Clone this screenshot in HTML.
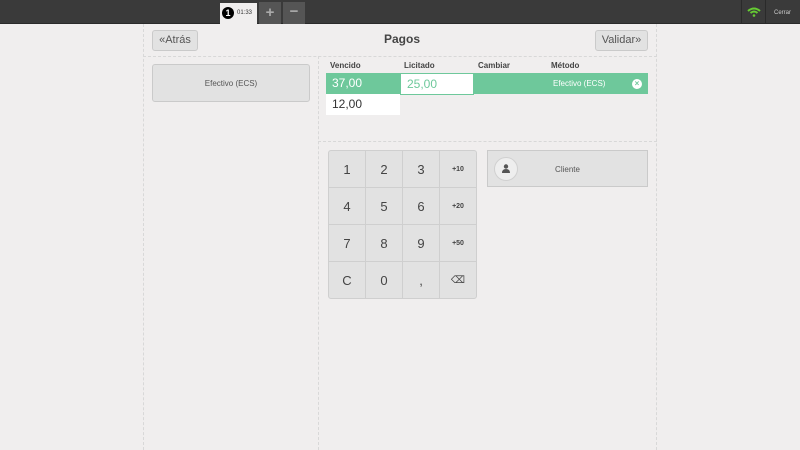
<!DOCTYPE html>
<html><head><style>
*{box-sizing:border-box;margin:0;padding:0}
body{width:800px;height:450px;background:#f0eeee;font-family:"Liberation Sans",sans-serif;position:relative;overflow:hidden;color:#555}
.a{position:absolute}
.top{left:0;top:0;width:800px;height:24px;background:#3a3a3a;border-bottom:1px solid #2a2a2a}
.btn{background:#e2e2e2;border:1px solid #cacaca;border-radius:3px;color:#555}
.num{position:absolute;width:37px;height:37px;border-right:1px solid #cfcfcf;border-bottom:1px solid #cfcfcf;display:flex;align-items:center;justify-content:center;font-size:13px;color:#444}
.sm{font-size:7px;font-weight:bold}
</style></head><body>
<div class="a top"></div>
<div class="a" style="left:220px;top:3px;width:37px;height:21px;background:#f0eeee;"></div>
<div class="a" style="left:222px;top:7px;width:12px;height:12px;border-radius:50%;background:#000;color:#fff;font-size:9px;font-weight:bold;text-align:center;line-height:12px">1</div>
<div class="a" style="left:237px;top:10px;font-size:6px;color:#333">01:33</div>
<div class="a" style="left:259px;top:2px;width:22px;height:22px;background:#555;color:#aaa;font-size:15px;text-align:center;line-height:22px;font-weight:bold">+</div>
<div class="a" style="left:283px;top:2px;width:22px;height:22px;background:#555;color:#aaa;font-size:15px;text-align:center;line-height:20px;font-weight:bold">−</div>
<div class="a" style="left:741px;top:0;width:1px;height:24px;background:#2a2a2a"></div>
<div class="a" style="left:765px;top:0;width:1px;height:24px;background:#2a2a2a"></div>
<svg class="a" style="left:747px;top:7px" width="14" height="10" viewBox="0 0 14 10"><path d="M1 4 Q7 -1 13 4" stroke="#6c3" stroke-width="2" fill="none"/><path d="M3.5 6 Q7 3 10.5 6" stroke="#6c3" stroke-width="2" fill="none"/><circle cx="7" cy="8.5" r="1.3" fill="#6c3"/></svg>
<div class="a" style="left:774px;top:10px;font-size:6px;color:#ccc">Cerrar</div>

<div class="a" style="left:143px;top:24px;width:514px;height:426px;border-left:1px dashed #d8d8d8;border-right:1px dashed #d8d8d8"></div>
<div class="a" style="left:143px;top:56px;width:514px;border-top:1px dashed #d8d8d8"></div>
<div class="a" style="left:318px;top:56px;height:394px;border-left:1px dashed #d8d8d8"></div>
<div class="a" style="left:318px;top:141px;width:339px;border-top:1px dashed #d8d8d8"></div>

<div class="a btn" style="left:152px;top:30px;width:46px;height:21px;font-size:11px;text-align:center;line-height:19px">«Atrás</div>
<div class="a" style="left:384px;top:32px;font-size:12px;font-weight:bold;color:#444">Pagos</div>
<div class="a btn" style="left:595px;top:30px;width:53px;height:21px;font-size:11px;text-align:center;line-height:19px">Validar»</div>

<div class="a btn" style="left:152px;top:64px;width:158px;height:38px;font-size:8px;text-align:center;line-height:38px">Efectivo (ECS)</div>

<div class="a" style="left:330px;top:61px;font-size:8px;font-weight:bold;color:#444">Vencido</div>
<div class="a" style="left:404px;top:61px;font-size:8px;font-weight:bold;color:#444">Licitado</div>
<div class="a" style="left:478px;top:61px;font-size:8px;font-weight:bold;color:#444">Cambiar</div>
<div class="a" style="left:551px;top:61px;font-size:8px;font-weight:bold;color:#444">Método</div>
<div class="a" style="left:326px;top:73px;width:322px;height:21px;background:#6ec89b"></div>
<div class="a" style="left:332px;top:76px;font-size:12px;color:#fff">37,00</div>
<div class="a" style="left:400px;top:73px;width:74px;height:22px;background:#fff;border:1px solid #6ec89b;font-size:12px;color:#6ec89b;padding:3px 0 0 6px">25,00</div>
<div class="a" style="left:553px;top:79px;font-size:8px;color:#fff">Efectivo (ECS)</div>
<div class="a" style="left:632px;top:79px;width:10px;height:10px;border-radius:50%;background:#fff;color:#6ec89b;font-size:8px;font-weight:bold;text-align:center;line-height:10px">×</div>
<div class="a" style="left:326px;top:94px;width:74px;height:21px;background:#fff;font-size:12px;color:#333;padding:3px 0 0 6px">12,00</div>

<div class="a" style="left:328px;top:150px;width:149px;height:149px;background:#e2e2e2;border:1px solid #cfcfcf;border-radius:3px;overflow:hidden">
<div class="num" style="left:0;top:0">1</div><div class="num" style="left:37px;top:0">2</div><div class="num" style="left:74px;top:0">3</div><div class="num sm" style="left:111px;top:0">+10</div>
<div class="num" style="left:0;top:37px">4</div><div class="num" style="left:37px;top:37px">5</div><div class="num" style="left:74px;top:37px">6</div><div class="num sm" style="left:111px;top:37px">+20</div>
<div class="num" style="left:0;top:74px">7</div><div class="num" style="left:37px;top:74px">8</div><div class="num" style="left:74px;top:74px">9</div><div class="num sm" style="left:111px;top:74px">+50</div>
<div class="num" style="left:0;top:111px">C</div><div class="num" style="left:37px;top:111px">0</div><div class="num" style="left:74px;top:111px">,</div><div class="num" style="left:111px;top:111px;font-size:10px">⌫</div>
</div>

<div class="a btn" style="left:487px;top:150px;width:161px;height:37px;font-size:8px;text-align:center;line-height:37px;border-radius:0">Cliente</div>
<div class="a" style="left:494px;top:157px;width:24px;height:24px;border-radius:50%;background:#eee;border:1px solid #d0d0d0"></div>
<svg class="a" style="left:502px;top:164px" width="8" height="9" viewBox="0 0 8 9"><circle cx="4" cy="2.5" r="2.2" fill="#555"/><path d="M0 9 Q0 5 4 5 Q8 5 8 9Z" fill="#555"/></svg>
</body></html>
